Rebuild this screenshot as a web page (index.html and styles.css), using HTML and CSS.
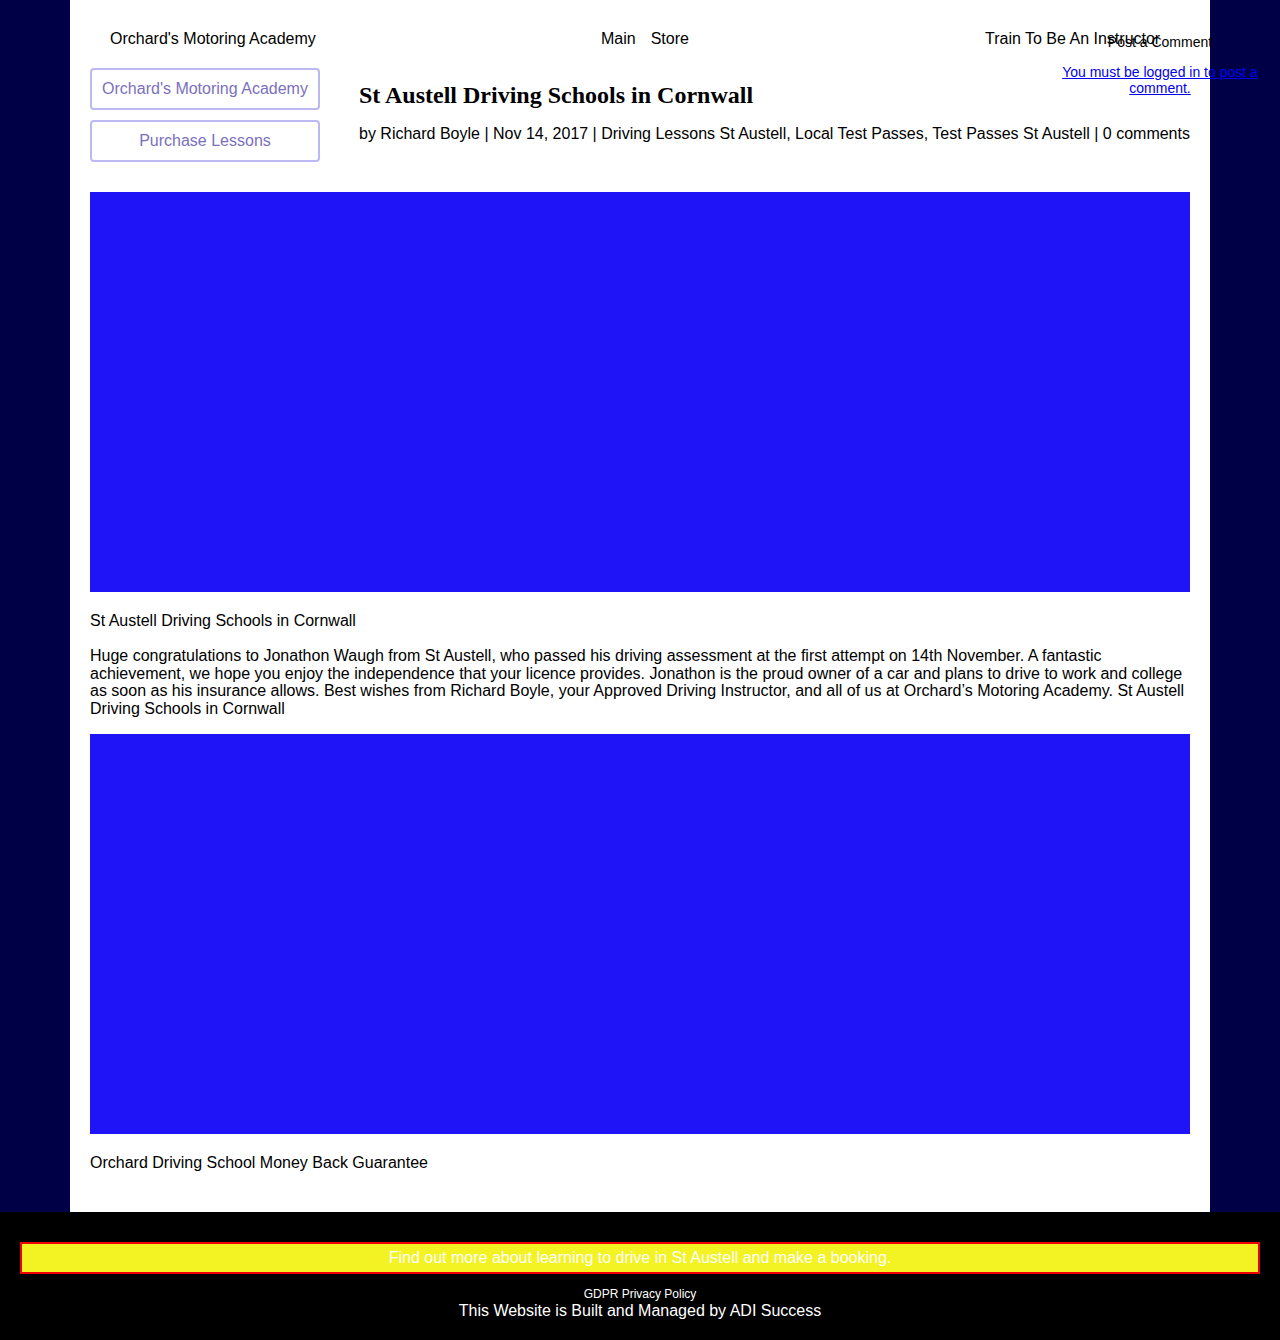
FILE: index.html
```html
<!DOCTYPE html>
<html lang="en">
<head>
<meta charset="utf-8">
<title>St Austell Driving Schools in Cornwall</title>
<link rel="stylesheet" href="styles.css">
</head>
<body>
<div class="page">
  <header class="site-header">
    <div class="logo">Orchard's Motoring Academy</div>
    <nav class="menu"><a href="#">Main</a><a href="#">Store</a></nav>
    <div class="menu-right"><a href="#">Train To Be An Instructor</a></div>
  </header>
  <div class="top-row">
    <aside class="sidebar">
      <a class="btn" href="#">Orchard's Motoring Academy</a>
      <a class="btn" href="#">Purchase Lessons</a>
    </aside>
    <div class="post-head">
      <h1 class="title">St Austell Driving Schools in Cornwall</h1>
      <p class="meta">by Richard Boyle | Nov 14, 2017 | Driving Lessons St Austell, Local Test Passes, Test Passes St Austell | 0 comments</p>
    </div>
  </div>
  <article class="content">
    <div class="photo"></div>
    <p class="caption">St Austell Driving Schools in Cornwall</p>
    <p class="body-text">Huge congratulations to Jonathon Waugh from St Austell, who passed his driving assessment at the first attempt on 14th November. A fantastic achievement, we hope you enjoy the independence that your licence provides. Jonathon is the proud owner of a car and plans to drive to work and college as soon as his insurance allows. Best wishes from Richard Boyle, your Approved Driving Instructor, and all of us at Orchard’s Motoring Academy. St Austell Driving Schools in Cornwall</p>
    <div class="photo photo-second"></div>
    <p class="caption">Orchard Driving School Money Back Guarantee</p>
  </article>
</div>
<div class="comment-box">
  <div class="comment-title">Post a Comment</div>
  <a class="comment-link" href="#">You must be logged in to post a comment.</a>
</div>
<footer class="site-footer">
  <a class="cta" href="#">Find out more about learning to drive in St Austell and make a booking.</a>
  <div class="gdpr">GDPR Privacy Policy</div>
  <div class="credit">This Website is Built and Managed by ADI Success</div>
</footer>
</body>
</html>
```

FILE: styles.css
```css
html, body {
  margin: 0;
  padding: 0;
}
body {
  background: #000046;
  font-family: "Liberation Sans", Arial, sans-serif;
  font-size: 16px;
  color: #000;
  position: relative;
}
a {
  color: inherit;
  text-decoration: none;
}
.page {
  width: 1100px;
  margin: 0 auto;
  background: #fff;
  padding: 20px 20px 40px;
}
.site-header {
  display: grid;
  grid-template-columns: 491px 384px 1fr;
  align-items: center;
  height: 38px;
  padding-left: 20px;
  line-height: 18px;
}
.menu {
  display: flex;
  gap: 15px;
}
.top-row {
  display: flex;
  gap: 39px;
  margin-top: 10px;
}
.sidebar {
  display: flex;
  flex-direction: column;
  gap: 10px;
  width: 230px;
  flex: none;
}
.btn {
  display: flex;
  align-items: center;
  justify-content: center;
  height: 38px;
  border: 2px solid #bcb8f2;
  border-radius: 4px;
  color: #7a70be;
  line-height: 18px;
}
.post-head {
  padding-top: 13px;
}
.title {
  font-family: "Liberation Serif", "Times New Roman", serif;
  font-size: 24px;
  font-weight: bold;
  line-height: 28px;
  margin: 0;
}
.meta {
  margin: 16px 0 0;
  line-height: 18px;
}
.content {
  margin-top: 30px;
}
.photo {
  height: 400px;
  background: #1f14f8;
}
.caption {
  margin: 20px 0 0;
  line-height: 18px;
}
.body-text {
  margin: 17px 0 17px;
  line-height: 17.5px;
}
.comment-box {
  position: absolute;
  top: 34px;
  right: 20px;
  width: 200px;
  text-align: center;
  font-size: 14px;
  line-height: 16px;
}
.comment-title {
  margin-bottom: 14px;
}
.comment-link {
  color: #0000ee;
  text-decoration: underline;
}
.site-footer {
  background: #000;
  color: #fff;
  padding: 30px 20px 20px;
  text-align: center;
}
.cta {
  display: block;
  background: #f3f223;
  border: 2px solid #f00000;
  color: #fff;
  height: 28px;
  line-height: 28px;
}
.gdpr {
  font-size: 12px;
  line-height: 15px;
  margin-top: 13px;
}
.credit {
  line-height: 18px;
}
```
